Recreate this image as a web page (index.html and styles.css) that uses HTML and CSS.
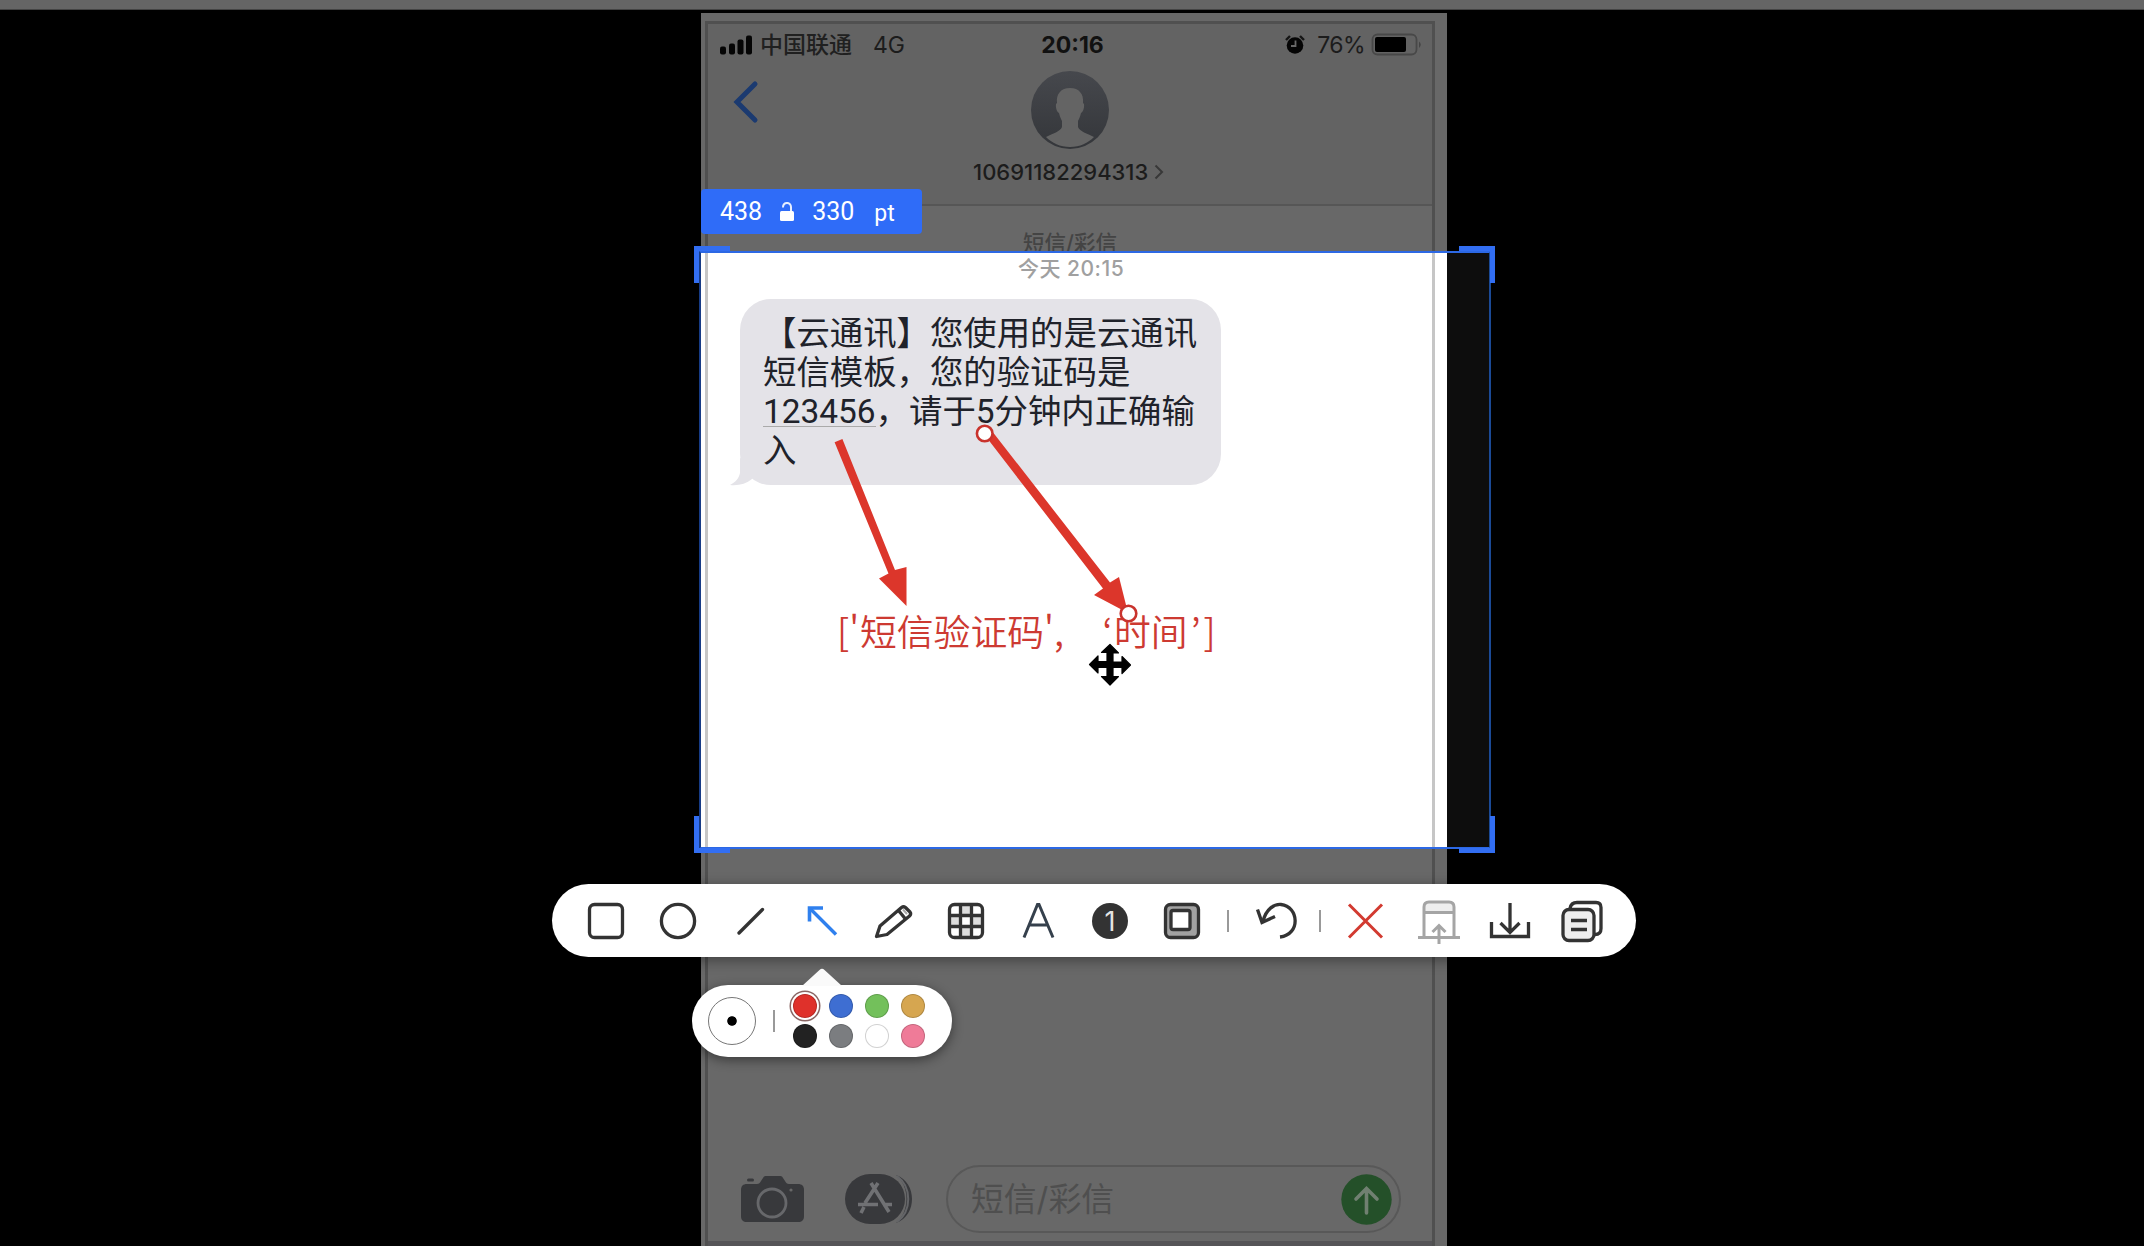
FILE: index.html
```html
<!DOCTYPE html>
<html lang="zh-CN">
<head>
<meta charset="utf-8">
<title>短信/彩信</title>
<link rel="stylesheet" href="styles.css">
</head>
<body>
<div class="topstrip"></div>
<main class="phone">
  <section class="dim upper">
    <div class="frame frame-top">
      <header class="header">
        <div class="status">
          <div class="carrier">
            <svg width="33" height="20" viewBox="0 0 33 20"><g fill="#050505"><rect x="0" y="11.5" width="6" height="8" rx="2"/><rect x="9" y="8.5" width="6" height="11" rx="2"/><rect x="17.5" y="4.500" width="6" height="15" rx="2"/><rect x="26" y=".5" width="6" height="19" rx="2"/></g></svg>
            <span class="operator">中国联通</span><span class="net">4G</span>
          </div>
          <div class="clock">20:16</div>
          <div class="power">
            <svg width="20" height="20" viewBox="0 0 20 20"><circle cx="10" cy="10.5" r="8.3" fill="#050505"/><path d="M1 5 5 1M19 5 15 1" stroke="#151515" stroke-width="2.4"/><path d="M10.5 5.5V11H6" fill="none" stroke="#686868" stroke-width="1.8"/></svg>
            <span class="percent">76%</span>
            <svg width="52" height="24" viewBox="0 0 52 24"><rect x="1.5" y="1.5" width="44" height="20" rx="5" fill="none" stroke="#484848" stroke-width="1.8"/><rect x="4" y="4" width="31" height="15" rx="2" fill="#000"/><path d="M48 8.5q3.500 3 0 6.500z" fill="#444"/></svg>
          </div>
        </div>
        <div class="contact">
          <svg class="back" width="26" height="44" viewBox="0 0 26 44"><path d="M22 4 4 22 22 40" fill="none" stroke="#1b3a70" stroke-width="5" stroke-linecap="round" stroke-linejoin="miter"/></svg>
          <svg class="avatar" width="78" height="78" viewBox="0 0 78 78">
            <defs><linearGradient id="av" x2="0" y2="1"><stop offset="0" stop-color="#46484d"/><stop offset="1" stop-color="#34363a"/></linearGradient></defs>
            <circle cx="39" cy="39" r="39" fill="url(#av)"/>
            <path d="M39 17c-9 0-14 6-13 15l-1 1c-.5 4 1 8 3 9 1 4 2 6 3 8v6c-2 5-9 6-16 10 6 6 14 10 24 10s18-4 24-10c-7-4-14-5-16-10v-6c1-2 2-4 3-8 2-1 3.500-5 3-9l-1-1c1-9-4-15-13-15z" fill="#646464"/>
          </svg>
        </div>
        <div class="number">10691182294313<svg width="10" height="18" viewBox="0 0 10 18"><path d="M1.500 2.500 8 9 1.500 15.500" fill="none" stroke="#383838" stroke-width="2"/></svg></div>
      </header>
      <div class="kind">短信/彩信</div>
    </div>
  </section>
  <section class="lit">
    <div class="frame frame-lit">
      <div class="when">今天 20:15</div>
      <div class="bubble">
        <p>【云通讯】您使用的是云通讯</p>
        <p>短信模板，您的验证码是</p>
        <p><span class="code">123456</span>，请于5分钟内正确输</p>
        <p>入</p>
        <svg class="tail" width="34" height="28" viewBox="0 0 34 28"><path d="M10 0V15C9 20 6 24 0 27c8 1 16-1 22-6L34 10z" fill="#e4e3e8"/></svg>
      </div>
      <div class="note"><span class="n1">['</span><span>短信验证码</span><span class="n2">',</span><span class="n3">‘</span><span>时间</span><span class="n4">’</span><span>]</span></div>
    </div>
  </section>
  <section class="dim lower">
    <div class="frame frame-bottom">
      <footer class="compose">
        <svg width="64" height="48" viewBox="0 0 64 48"><path d="M6 9h10c2 0 3-1 4-3l2-3c1-2 2-2 4-2h12c2 0 3 0 4 2l2 3c1 2 2 3 4 3h9c4 0 6 2 6 6v26c0 4-2 6-6 6H6c-4 0-6-2-6-6V15c0-4 2-6 6-6z" fill="#38393c"/><rect x="6" y="3.500" width="7" height="3" rx="1.500" fill="#38393c"/><circle cx="31" cy="28" r="14" fill="none" stroke="#67686b" stroke-width="2.800"/><circle cx="50" cy="15" r="1.600" fill="#686868"/></svg>
        <svg class="apps" width="69" height="52" viewBox="0 0 69 52"><path d="M51 2C62 6 67 16 67 26S62 46 51 50C65 39 65 13 51 2z" fill="#38393c"/><rect x="0" y="1" width="60" height="50" rx="25" fill="#38393c"/><path d="M52 3C67 14 67 38 52 49" fill="none" stroke="#646568" stroke-width="2"/><g stroke="#707174" stroke-width="3.600" fill="none"><path d="M13 31.500h20M38 31.500h9M26 10l18 29M33 10 20 30M19 34l-3 6"/></g></svg>
        <div class="field"><span>短信/彩信</span><svg width="51" height="51" viewBox="0 0 51 51"><circle cx="25.500" cy="25.500" r="25.200" fill="#245029"/><path d="M25.500 39V15M15 25l10.500-10.500L36 25" fill="none" stroke="#708071" stroke-width="3.600" stroke-linecap="round"/></svg></div>
      </footer>
      <div class="endline"></div>
    </div>
  </section>
</main>

<div class="selection">
  <i class="corner tl"></i><i class="corner tr"></i><i class="corner bl"></i><i class="corner br"></i>
</div>
<div class="size"><span>438</span><svg width="14" height="20" viewBox="0 0 14 20"><rect x="0" y="9" width="14" height="10" rx="1.500" fill="#fff"/><path d="M3 5.500c0-6 8-6 8-.5V9" fill="none" stroke="#e6eeff" stroke-width="2"/></svg><span>330</span><span class="unit">pt</span></div>

<svg class="marks" width="330" height="270" viewBox="820 420 330 270">
  <g fill="#dc362b"><path d="M834.600 442.200 842.400 439 895 570 906.500 567 906.500 606 879 578.500 888.500 573.500z"/><path d="M987 438 993.500 433 1110 582.500 1119 577 1128 613 1094 595 1103 588.500z"/></g>
  <g fill="#fff" stroke="#c9332d" stroke-width="2.600"><circle cx="984.700" cy="433.500" r="7.800"/><circle cx="1128.500" cy="613.500" r="7.800"/></g>
  <path d="M1110 644.500l8.500 8.500h-5.500v9h9v-5.500l8.500 8.500-8.500 8.500V667.500h-9v9h5.500l-8.500 8.500-8.500-8.500h5.500v-9h-9v5.500l-8.500-8.500 8.500-8.500v5.500h9v-9h-5.500z" fill="#000" stroke="#000" stroke-width="1.200" stroke-linejoin="round"/>
</svg>

<nav class="toolbar">
  <svg class="ico" viewBox="0 0 44 44"><rect x="5.500" y="5.500" width="33" height="33" rx="5" class="ln"/></svg>
  <svg class="ico" viewBox="0 0 44 44"><circle cx="22" cy="22" r="16.600" class="ln"/></svg>
  <svg class="ico" viewBox="0 0 44 44"><path d="M11 34 34.500 10.500" class="ln" stroke-linecap="round"/></svg>
  <svg class="ico" viewBox="0 0 44 44"><path d="M36 35.500 10.500 10" stroke="#2f80ee" stroke-width="3.400"/><path d="M9.500 22.500V9H23" fill="none" stroke="#2f80ee" stroke-width="3.600"/></svg>
  <svg class="ico" viewBox="0 0 44 44"><path d="M4.500 37.500 8 27 29.500 8.500q2-1.500 4 0l4.500 4.500q1.500 2-.5 4L15 35.500z" class="ln" stroke-linejoin="round"/><path d="M26.500 11.500l7 8.500" class="ln"/><path d="M31 10.500l4 4.500" stroke="#aaa" stroke-width="2"/></svg>
  <svg class="ico" viewBox="0 0 44 44"><rect x="5.500" y="5.500" width="33" height="33" rx="5" fill="#fff"/><path d="M17 5h10v10H17zM5 17h10v10H5zM29 17h10v10H29zM17 29h10v10H17z" fill="#ddd"/><path d="M16.500 5v34M27.500 5v34M5 16.500h34M5 27.500h34" class="ln"/><rect x="5.500" y="5.500" width="33" height="33" rx="5" class="ln"/></svg>
  <svg class="ico" viewBox="0 0 44 44"><path d="M8 38.500 21.500 5.500h1.500L37 38.500M13 26h19" fill="none" stroke="#35404c" stroke-width="3"/></svg>
  <span class="ico"><b class="one">1</b></span>
  <svg class="ico" viewBox="0 0 44 44"><rect x="5.500" y="5.500" width="33" height="33" rx="5" fill="#a2a2a2" class="edge"/><rect x="11" y="11.500" width="19" height="19" rx="2" fill="#fff" class="edge"/></svg>
  <i class="sep s1"></i>
  <svg class="ico" viewBox="0 0 44 44"><path d="M8 22.500C11 10 19 5 26 5.500c18 2 20 30-1 32.500" class="ln"/><path d="M2.500 10.500 7 23.500 20 17.500" class="ln"/></svg>
  <i class="sep s2"></i>
  <svg class="ico" viewBox="0 0 44 44"><path d="M5 5.500 38 38.500M38 5.500 5 38.500" stroke="#d23a30" stroke-width="3"/></svg>
  <svg class="ico pin" viewBox="0 0 44 44"><path d="M7 38V8q0-5 5-5h20q5 0 5 5v30" fill="#fff"/><path d="M7 13V8q0-5 5-5h20q5 0 5 5v5z" fill="#eee"/><path d="M7 38V8q0-5 5-5h20q5 0 5 5v30M7 13.500h30M1 38.500h42M22 45V27M15.500 33l6.500-6.500 6.500 6.500" fill="none" stroke="#a5a5a5" stroke-width="3"/></svg>
  <svg class="ico load" viewBox="0 0 44 44"><path d="M3.500 23v14.500h37V23M22 4v29M12.500 24l9.500 9.500 9.500-9.500" class="ln"/></svg>
  <svg class="ico" viewBox="0 0 44 44"><path d="M10 9.500q1-6 7-6h19q5 0 5 5v21q0 6-6 6" fill="#fff" class="edge"/><rect x="3" y="10.500" width="31" height="31" rx="6" fill="#eee" class="edge"/><path d="M11 21.500h16M11 30.500h16" class="ln"/></svg>
</nav>

<div class="palette">
  <svg class="nib" width="40" height="18" viewBox="0 0 40 18"><path d="M0 18 17.500 2Q20-.500 22.500 2L40 18z" fill="#fafafa"/></svg>
  <div class="stroke-size"></div>
  <i class="divider"></i>
  <div class="swatches">
    <i class="red"></i><i class="blue"></i><i class="green"></i><i class="gold"></i>
    <i class="black"></i><i class="gray"></i><i class="white"></i><i class="pink"></i>
  </div>
</div>
</body>
</html>
```
FILE: styles.css
```css
* { box-sizing: border-box; }
body {
  margin: 0;
  width: 2144px;
  height: 1246px;
  overflow: hidden;
  position: relative;
  background: #000;
  font-family: Inter, "Noto Sans CJK SC", sans-serif;
  text-spacing-trim: space-all;
}
svg { display: block; flex: none; }
p { margin: 0; }

.topstrip { height: 10px; background: #656565; border-bottom: 1px solid #444; }

/* Message screen */
.phone {
  width: 746px;
  height: 1233px;
  margin: 3px 0 0 701px;
  display: flex;
  flex-direction: column;
}
.dim { background: #686868; padding: 0 12px 0 4px; }
.upper { height: 239px; padding-top: 8px; }
.frame { height: 100%; border: 0 solid #505050; border-width: 0 3px; }
.frame-top { border-top-width: 3px; }
.header { height: 182px; background: #636363; border-bottom: 2px solid #565656; }

.status {
  height: 41px;
  padding: 0 9px 0 12px;
  display: grid;
  grid-template-columns: 1fr auto 1fr;
  align-items: center;
  color: #111;
}
.carrier, .power { display: flex; align-items: center; }
.power { justify-content: flex-end; }
.operator { margin-left: 7px; font-size: 23px; line-height: 30px; font-weight: 500; color: #202020; }
.net { margin-left: 21px; font-size: 23px; color: #1c1c1c; }
.clock { font-size: 23px; font-weight: 700; padding-left: 2px; }
.percent { margin: 0 6px 0 12px; font-size: 23px; letter-spacing: -.6px; color: #1c1c1c; }

.contact { height: 84px; display: grid; grid-template-columns: 323px 1fr; padding-top: 5px; }
.back { margin: 10px 0 0 25px; }
.avatar { margin-top: 1px; }
.number {
  margin-left: 265px;
  padding-top: 8px;
  display: flex;
  align-items: center;
  gap: 6px;
  font-size: 22px;
  line-height: 30px;
  font-weight: 500;
  color: #1c1c1c;
}
.kind { margin-left: 315px; padding-top: 21px; font-size: 21.5px; line-height: 32px; font-weight: 500; color: #444; white-space: nowrap; }

.lit { height: 596px; background: #fff; padding: 0 12px 0 4px; }
.frame-lit { border-color: #c6c6c6; display: flex; flex-direction: column; align-items: flex-start; }
.when { margin: 2px 0 0 310px; font-size: 21px; line-height: 30px; letter-spacing: .5px; font-weight: 500; color: #a0a0a0; white-space: nowrap; }
.bubble {
  position: relative;
  width: 481px;
  height: 186px;
  margin: 15px 0 0 32px;
  padding: 15px 0 0 23px;
  border-radius: 31px;
  background: #e4e3e8;
  color: #20222a;
  font: 33.4px/39.1px Roboto, "Noto Sans CJK SC", sans-serif;
  white-space: nowrap;
}
.code { background: linear-gradient(#aaa, #aaa) 0 calc(100% - 4px) / 100% 1px no-repeat; }
.tail { position: absolute; left: -10px; bottom: -1px; }
.note {
  margin: 117px 0 0 129px;
  display: flex;
  font: 350 36.8px/56px "Noto Sans CJK SC", sans-serif;
  color: #cd3a32;
}
.n1 { width: 23px; }
.n2 { width: 57px; }
.n3, .n4 { font-family: "Noto Sans CJK KR", sans-serif; }
.n3 { width: 13px; text-align: center; }
.n4 { width: 16px; text-align: center; }

.lower { height: 398px; }
.frame-bottom { display: flex; flex-direction: column; justify-content: flex-end; }
.compose { height: 68px; margin: 0 31px 8px 33px; display: flex; align-items: center; }
.apps { margin-left: 40px; }
.field {
  flex: 1;
  height: 68px;
  margin-left: 32px;
  padding: 0 7px 0 23px;
  display: flex;
  align-items: center;
  justify-content: space-between;
  border: 2px solid #585858;
  border-radius: 34px;
  font-size: 32.8px;
  line-height: 60px;
  color: #4f4f4f;
}
.endline { height: 5px; background: #555457; }

/* Capture region */
.selection {
  position: absolute;
  left: 699px;
  top: 251px;
  width: 792px;
  height: 598px;
  border: 2px solid #2c68e4;
  border-left-color: #173c86;
  border-right-color: #1b4a96;
  background: linear-gradient(#0d0d0d, #0d0d0d) right / 42px 100% no-repeat;
}
.corner { position: absolute; width: 36px; height: 37px; border: 0 solid #326ef2; }
.tl { left: -7px; top: -7px; border-width: 5px 0 0 5px; }
.tr { right: -6px; top: -7px; border-width: 5px 5px 0 0; }
.bl { left: -7px; bottom: -6px; border-width: 0 0 5px 5px; }
.br { right: -6px; bottom: -6px; border-width: 0 5px 5px 0; }
.size {
  position: absolute;
  left: 701px;
  top: 189px;
  width: 221px;
  height: 45px;
  padding-left: 19px;
  display: flex;
  align-items: center;
  border-radius: 4px;
  background: #2f6cf8;
  color: #fff;
  font: 25px/45px Roboto, sans-serif;
}
.size svg { margin: 0 18px; }
.size .unit { margin: 3px 0 0 20px; font-size: 23px; }
.marks { position: absolute; left: 820px; top: 420px; }

/* Annotation tools */
.toolbar {
  position: absolute;
  left: 552px;
  top: 884px;
  width: 1084px;
  height: 73px;
  padding-left: 32px;
  display: flex;
  align-items: center;
  border-radius: 37px;
  background: #fff;
  box-shadow: 0 3px 14px rgba(0,0,0,.4);
}
.ico { width: 44px; height: 44px; flex: none; overflow: visible; }
.ico + .ico { margin-left: 28px; }
.ln { fill: none; stroke: #333; stroke-width: 3.3; }
.edge { stroke: #333; stroke-width: 3.3; }
.one {
  display: block;
  width: 36px;
  height: 36px;
  margin: 4px;
  border-radius: 50%;
  background: #333;
  color: #e5e5e5;
  text-align: center;
  font: 400 27px/37px Inter, sans-serif;
}
.sep { width: 2px; height: 22px; background: #999; flex: none; }
.s1 { margin: 0 26px 0 23px; }
.s2 { margin: 0 23px 0 20px; }
.toolbar .pin { margin-left: 29px; }
.toolbar .load { margin-left: 27px; }

.palette {
  position: absolute;
  left: 692px;
  top: 985px;
  width: 260px;
  height: 72px;
  padding-left: 16px;
  display: flex;
  align-items: center;
  border-radius: 36px;
  background: #fff;
  box-shadow: 0 3px 12px rgba(0,0,0,.45);
}
.nib { position: absolute; left: 110px; top: -17px; }
.stroke-size {
  width: 48px;
  height: 48px;
  border: 1.5px solid #777;
  border-radius: 50%;
  background: radial-gradient(circle, #000 4.3px, transparent 5.2px);
}
.divider { width: 2px; height: 22px; margin: 0 18px 0 17px; background: #999; }
.swatches { display: grid; grid-template-columns: repeat(4, 24px); gap: 6.500px 12px; }
.swatches i { height: 24px; border-radius: 50%; border: 1px solid rgba(0,0,0,.18); }
.red { background: #df312b; box-shadow: 0 0 0 2px #fff, 0 0 0 3.500px #8a6664; }
.blue { background: #3e6ed2; }
.green { background: #73c05b; }
.gold { background: #d6a650; }
.black { background: #222; }
.gray { background: #7b7d80; }
.white { background: #fff; }
.pink { background: #ef7b98; }
```
